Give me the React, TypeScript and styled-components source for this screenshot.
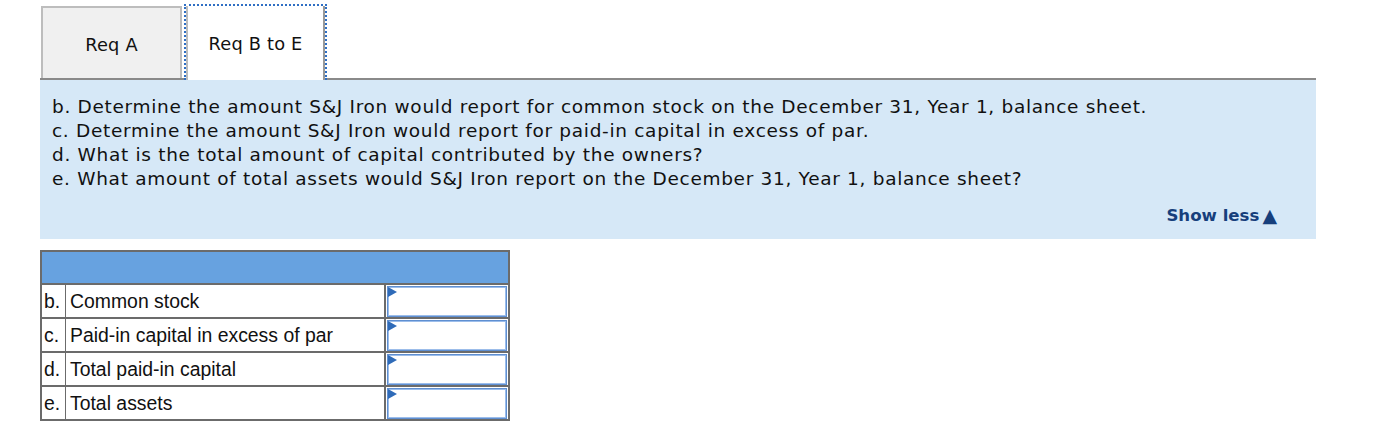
import React from "react";
import styled, { createGlobalStyle } from "styled-components";

const Global = createGlobalStyle`
  html, body { margin: 0; padding: 0; background: #fff; }
  body { font-family: "DejaVu Sans", Verdana, sans-serif; color: #111; }
`;

const Page = styled.div`
  width: 1380px;
  height: 428px;
  padding: 4px 64px 0 40px;
  box-sizing: border-box;
`;

const TabBar = styled.div`
  display: flex;
  align-items: flex-end;
  padding-left: 1px;
  border-bottom: 2px solid #8a8a8a;
  height: 74px;
`;

const Tab = styled.button<{ $active?: boolean }>`
  box-sizing: border-box;
  padding: 0;
  cursor: pointer;
  font-family: "DejaVu Sans", Verdana, sans-serif;
  font-size: 17.8px;
  letter-spacing: 0.2px;
  color: #111;
  ${(p) =>
    p.$active
      ? `
    width: 143px;
    height: 76px;
    margin-bottom: -2px;
    background: #fff;
    border: 2px dotted #2f6fc4;
    border-bottom: none;
    box-shadow: inset 2px 0 0 #bdbdbd, inset -2px 0 0 #999;
  `
      : `
    width: 141px;
    height: 72px;
    margin-right: 2px;
    background: #f0f0f0;
    border: 2px solid #bdbdbd;
    border-bottom: none;
    padding-top: 2px;
  `}
`;

const Panel = styled.div`
  background: #d6e8f7;
  height: 159px;
  padding: 15px 12px 0 12px;
  box-sizing: border-box;
  display: flex;
  flex-direction: column;
`;

const Line = styled.div`
  font-size: 18.5px;
  line-height: 24px;
  letter-spacing: 0.69px;
  white-space: nowrap;
`;

const ShowLess = styled.div`
  margin-top: auto;
  margin-bottom: 14px;
  align-self: flex-end;
  margin-right: 27px;
  font-weight: bold;
  font-size: 16.6px;
  color: #173f7c;
  display: flex;
  align-items: center;
  gap: 3px;
`;

const Tri = styled.span`
  font-size: 19px;
  line-height: 1;
`;

const Table = styled.table`
  margin-top: 11px;
  border-collapse: collapse;
  width: 470px;
  border: 2px solid #6b6b6b;
  font-family: "Liberation Sans", Arial, sans-serif;
  font-size: 19.4px;
  color: #111;
`;

const HeadCell = styled.td`
  background: #67a2e0;
  height: 31px;
  padding: 0;
`;

const Row = styled.tr`
  border-top: 2px solid #6b6b6b;
`;

const Letter = styled.td`
  width: 21px;
  height: 32px;
  padding: 0 0 0 2px;
  border-right: 1px solid #6b6b6b;
`;

const Label = styled.td`
  padding: 0 0 0 4px;
  width: 314px;
`;

const InputCell = styled.td`
  border-left: 2px solid #6b6b6b;
  padding: 1px 1px 0 1px;
  position: relative;
`;

const AmountBox = styled.div`
  box-sizing: border-box;
  height: 31px;
  border: 1px solid #5f8fd1;
  outline: 1px solid #9cbdea;
  outline-offset: -2px;
  background: #fff;
`;

const Flag = styled.span`
  position: absolute;
  left: 2px;
  top: 2px;
  width: 0;
  height: 0;
  border-top: 5px solid transparent;
  border-bottom: 5px solid transparent;
  border-left: 9px solid #2f6bb8;
`;

const rows = [
  ["b.", "Common stock"],
  ["c.", "Paid-in capital in excess of par"],
  ["d.", "Total paid-in capital"],
  ["e.", "Total assets"],
];

export default function App() {
  return (
    <>
      <Global />
      <Page>
        <TabBar>
          <Tab>Req A</Tab>
          <Tab $active>Req B to E</Tab>
        </TabBar>
        <Panel>
          <Line>b. Determine the amount S&amp;J Iron would report for common stock on the December 31, Year 1, balance sheet.</Line>
          <Line>c. Determine the amount S&amp;J Iron would report for paid-in capital in excess of par.</Line>
          <Line>d. What is the total amount of capital contributed by the owners?</Line>
          <Line>e. What amount of total assets would S&amp;J Iron report on the December 31, Year 1, balance sheet?</Line>
          <ShowLess>
            Show less<Tri>▲</Tri>
          </ShowLess>
        </Panel>
        <Table>
          <tbody>
            <tr>
              <HeadCell colSpan={3} />
            </tr>
            {rows.map(([l, t]) => (
              <Row key={l}>
                <Letter>{l}</Letter>
                <Label>{t}</Label>
                <InputCell>
                  <AmountBox />
                  <Flag />
                </InputCell>
              </Row>
            ))}
          </tbody>
        </Table>
      </Page>
    </>
  );
}
